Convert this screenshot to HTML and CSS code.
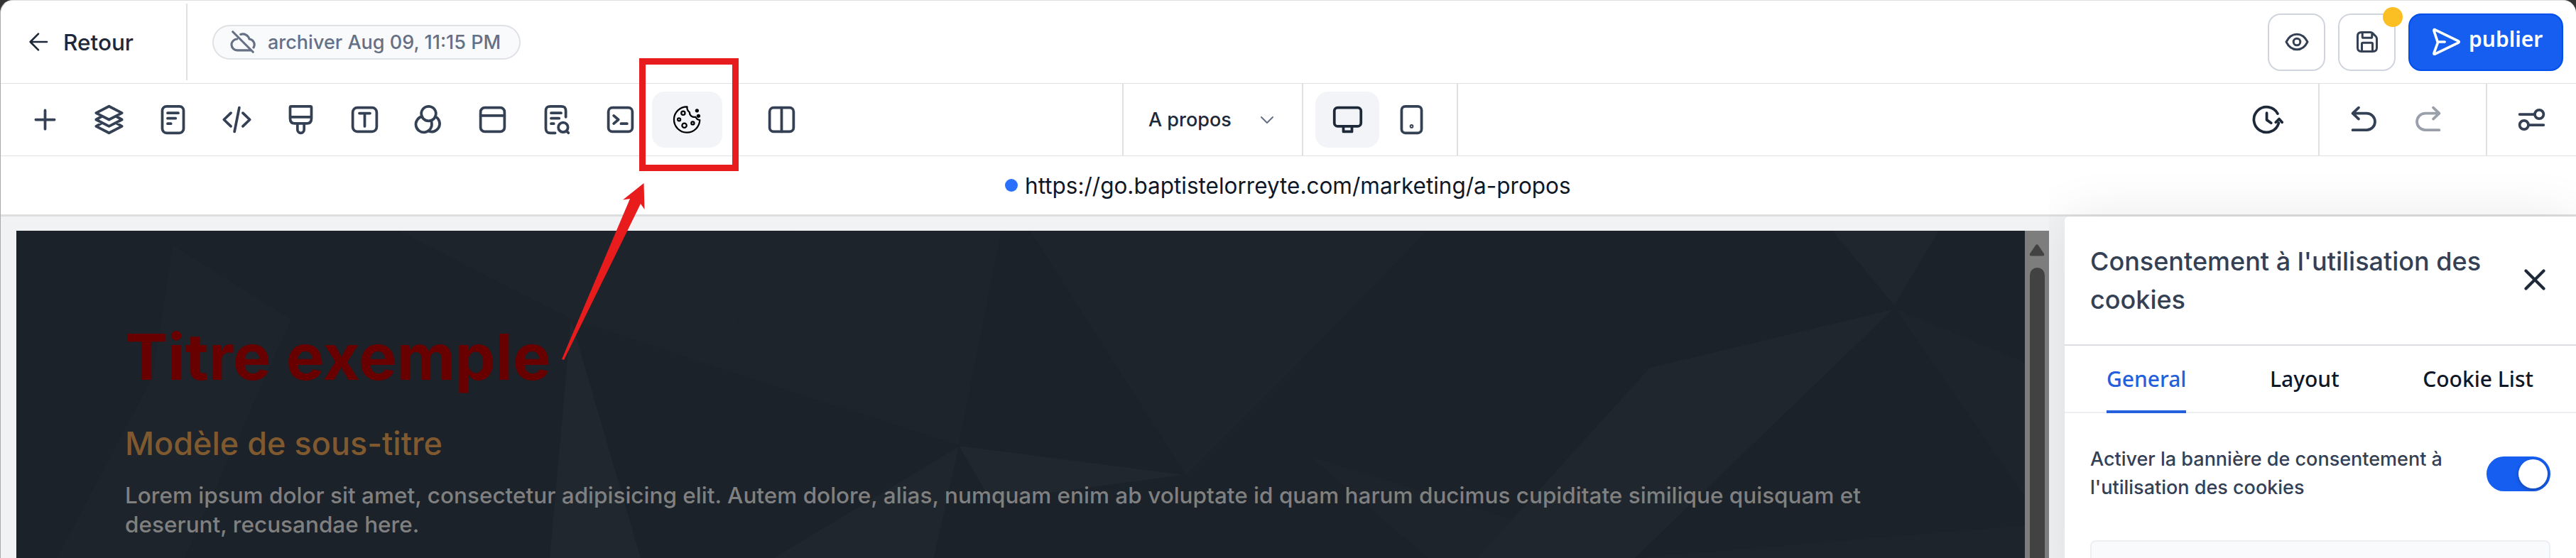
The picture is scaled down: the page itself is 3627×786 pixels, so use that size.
FILE: index.html
```
<!DOCTYPE html>
<html lang="fr">
<head>
  <meta charset="UTF-8" />
  <meta name="viewport" content="width=device-width, initial-scale=1.0" />
  <title>Page Builder</title>
  <link rel="stylesheet" href="styles.css">
</head>
<body>
  <div class="app">
    <header class="topbar">
      <button class="back">
        <svg class="icon" width="32" height="32" viewBox="0 0 24 24" aria-hidden="true"><path d="M21 12H3.5M12 20.500L3.500 12L12 3.500" /></svg>
        <span>Retour</span>
      </button>
      <div class="status">
        <svg class="icon" width="38" height="38" viewBox="0 0 24 24" aria-hidden="true"><path d="M3 3l18 18M6.800 9.500A5 5 0 0 0 7 19.500H18.500M10 5.300A6 6 0 0 1 17.700 9.500A5 5 0 0 1 21.500 17" /></svg>
        <span>archiver Aug 09, 11:15 PM</span>
      </div>
      <div class="actions">
        <button class="square-btn" aria-label="Aperçu">
          <svg class="icon" width="36" height="36" viewBox="0 0 24 24"><path d="M2 12C4.500 7 8 4.800 12 4.800S19.500 7 22 12C19.500 17 16 19.200 12 19.200S4.500 17 2 12Z" /><circle cx="12" cy="12" r="3.200" /></svg>
        </button>
        <button class="square-btn" aria-label="Enregistrer">
          <svg class="icon" width="36" height="36" viewBox="0 0 24 24"><path d="M7.500 3v4.300c0 .6.300.9.900.9h7.200c.6 0 .9-.300.9-.900V3.500M17 21v-7.300c0-.6-.3-.9-.9-.9H7.900c-.6 0-.9.300-.900.900V21M21 9v8.500c0 2.500-1 3.500-3.500 3.500h-11C4 21 3 20 3 17.500v-11C3 4 4 3 6.500 3H15c1 0 1.500.2 2.200.9l2.900 2.900C20.800 7.500 21 8 21 9z" /></svg>
          <span class="badge"></span>
        </button>
        <button class="publish">
          <svg class="icon" width="44" height="44" viewBox="0 0 24 24"><path d="M11 12H5.500M5.700 12.500L2.700 20.600c-.2.700.2 1 .8.700L21.500 12.600c.6-.3.600-.9 0-1.200L3.500 2.700c-.6-.3-1 0-.8.700L5.700 12.500z" /></svg>
          <span>publier</span>
        </button>
      </div>
    </header>

    <nav class="toolbar">
      <div class="tools">
        <button class="tool"><svg class="icon" width="45" height="45" viewBox="0 0 24 24"><path d="M12 5v14M5 12h14" /></svg></button>
        <button class="tool"><svg class="icon" width="45" height="45" viewBox="0 0 24 24"><path d="M12 2l9.700 5L12 12L2.300 7zM6.500 9.600L2.300 12L12 17l9.700-5l-4.200-2.400M6.500 14.600L2.300 17L12 22l9.700-5l-4.200-2.400" /></svg></button>
        <button class="tool"><svg class="icon" width="45" height="45" viewBox="0 0 24 24"><rect x="4" y="2" width="16" height="20" rx="3.200" /><path d="M8 7h8M8 11h6M8 15h2.500" /></svg></button>
        <button class="tool"><svg class="icon" width="45" height="45" viewBox="0 0 24 24"><path d="M7.500 7L2.300 12l5.200 5M16.500 7l5.200 5l-5.200 5M13.800 3l-3.600 18" /></svg></button>
        <button class="tool"><svg class="icon" width="45" height="45" viewBox="0 0 24 24"><path d="M4 2.800c0-.500.300-.800.800-.800h14.400c.5 0 .8.300.8.800V11c0 2.500-1 3.800-3.500 3.800h-9C5 14.800 4 13.500 4 11zM4 10h16M9.500 15v4.500a2.500 2.500 0 0 0 5 0V15" /></svg></button>
        <button class="tool"><svg class="icon" width="45" height="45" viewBox="0 0 24 24"><rect x="3" y="3" width="18" height="18" rx="3.500" /><path d="M8 7.200h8M12 7.200V17" /></svg></button>
        <button class="tool"><svg class="icon" width="45" height="45" viewBox="0 0 24 24"><circle cx="12" cy="7.500" r="5.500" /><path d="M7 9.700A6 6 0 1 0 14.300 14.500L14 12.700M17 9.700A6 6 0 1 1 11.500 20.500" /></svg></button>
        <button class="tool"><svg class="icon" width="45" height="45" viewBox="0 0 24 24"><rect x="3" y="3" width="18" height="18" rx="3.200" /><path d="M3 9h18" /></svg></button>
        <button class="tool"><svg class="icon" width="45" height="45" viewBox="0 0 24 24"><path d="M19 10V5.500C19 3 18 2 15.500 2h-8C5 2 4 3 4 5.500v13C4 21 5 22 7.500 22H11M8 7h7.500M8 11h6M8 15h2M21 22l-1.500-1.500" /><circle cx="17" cy="17.800" r="3.600" /></svg></button>
        <button class="tool"><svg class="icon" width="45" height="45" viewBox="0 0 24 24"><rect x="3" y="3" width="18" height="18" rx="3" /><path d="M7 9l3.500 3L7 15M12.500 15h4.500" /></svg></button>
        <button class="tool active">
          <svg class="icon cookie" width="45" height="45" viewBox="0 0 24 24"><path d="M12 2.300A9.700 9.700 0 1 0 21.500 12.300C20 12.300 19 11.300 18.300 10C16 10.500 13.800 9 13.800 6.500C12.500 5.500 11.800 4 12 2.300z" /><circle cx="9" cy="7" r="1.400" /><circle cx="5.900" cy="11.900" r="1.100" /><circle cx="9.900" cy="16.400" r="1.700" /><circle cx="16.200" cy="14.600" r="1.100" /><circle class="crumb" cx="19.400" cy="5.200" r="1.400" /><circle class="crumb" cx="20.500" cy="9.200" r="1.400" /></svg>
        </button>
        <button class="tool columns"><svg class="icon" width="45" height="45" viewBox="0 0 24 24"><rect x="3" y="3" width="18" height="18" rx="3" /><path d="M12 3v18" /></svg></button>
      </div>
      <div class="page-select">
        <span>A propos</span>
        <svg class="icon chevron" width="24" height="24" viewBox="0 0 24 24"><path d="M4 8l8 8l8-8" /></svg>
      </div>
      <div class="devices">
        <button class="device active"><svg class="icon" width="45" height="45" viewBox="0 0 24 24"><rect x="2" y="3" width="20" height="14" rx="2.500" /><path d="M8.800 17v4h6.400v-4" /></svg></button>
        <button class="device"><svg class="icon" width="45" height="45" viewBox="0 0 24 24"><rect x="4.500" y="2" width="15" height="20" rx="2.800" /><circle cx="12" cy="17" r=".5" /></svg></button>
      </div>
      <div class="history">
        <button><svg class="icon dark" width="45" height="45" viewBox="0 0 24 24"><path d="M19.700 7.500A9.500 9.500 0 1 0 20.500 14.500M18.300 14l2.500-2.500L23 14M11.500 7v5.200l3.300 2.300" /></svg></button>
      </div>
      <div class="undo-redo">
        <button><svg class="icon" width="45" height="45" viewBox="0 0 24 24"><path d="M8 3L3.500 7.300L8 11.500M3.500 7.300H14a6 6 0 0 1 0 12.500H3.500" /></svg></button>
        <button class="disabled"><svg class="icon" width="45" height="45" viewBox="0 0 24 24"><path d="M16 3l4.500 4.300L16 11.500M20.500 7.300H10a6 6 0 0 0 0 12.500H20.500" /></svg></button>
      </div>
      <div class="settings">
        <button><svg class="icon" width="45" height="45" viewBox="0 0 24 24"><path d="M3 8h11.500M9.500 16H21" /><circle cx="17.700" cy="8" r="3.300" /><circle cx="6.300" cy="16" r="3.300" /></svg></button>
      </div>
    </nav>

    <div class="urlbar">
      <span class="dot"></span>
      <span>https://go.baptistelorreyte.com/marketing/a-propos</span>
    </div>

    <main class="workspace">
      <section class="canvas">
        <svg class="facets" viewBox="23 325 2828 461" preserveAspectRatio="none" aria-hidden="true">
          <g fill="#1d242b">
            <path d="M243 345L215 530L80 786H260L410 450z" />
            <path d="M1118 325H1410L1350 627L1000 515z" />
            <path d="M1450 325H2010L1830 510L1670 670z" />
            <path d="M560 325H1118L1000 515L806 450z" />
            <path d="M2668 434L2851 510V700z" />
            <path d="M2302 786L2851 740V786z" />
            <path d="M1843 642L2010 786H2302z" />
          </g>
          <g fill="#1f262d">
            <path d="M2580 325H2730L2667 430z" />
            <path d="M2665 436L2323 518L2080 786H2302z" />
            <path d="M1350 629L1090 786H1315z" />
          </g>
          <g fill="#21272e">
            <path d="M804 450L774 786H902z" />
            <path d="M1350 628L1667 669L1395 705z" />
          </g>
        </svg>
        <div class="content">
          <h1>Titre exemple</h1>
          <h2>Modèle de sous-titre</h2>
          <p>Lorem ipsum dolor sit amet, consectetur adipisicing elit. Autem dolore, alias, numquam enim ab voluptate id quam harum ducimus cupiditate similique quisquam et<br>deserunt, recusandae here.</p>
        </div>
      </section>
      <div class="scrollbar">
        <svg width="22" height="17" viewBox="0 0 22 17"><path d="M9 1.500q2-2.500 4 0l8 12q1 3-2 3H3q-3 0-2-3z" /></svg>
        <div class="thumb"></div>
      </div>

      <aside class="panel">
        <div class="panel-head">
          <h3>Consentement à l'utilisation des cookies</h3>
          <svg class="icon close" width="50" height="50" viewBox="0 0 24 24"><path d="M6 6l12 12M18 6L6 18" /></svg>
        </div>
        <div class="tabs">
          <a class="tab selected">General</a>
          <a class="tab">Layout</a>
          <a class="tab">Cookie List</a>
        </div>
        <div class="setting">
          <label>Activer la bannière de consentement à l'utilisation des cookies</label>
          <span class="toggle"><span class="knob"></span></span>
        </div>
        <div class="box"></div>
      </aside>
    </main>

    <!-- Highlight on the cookie button -->
    <div class="highlight"></div>
    <svg class="arrow" width="130" height="260" viewBox="780 250 130 260" aria-hidden="true">
      <path d="M791 506L887 280L877 281.500L906.500 258L907.500 295L902 287L794 507z" />
    </svg>
  </div>
</body>
</html>
```
FILE: styles.css
```
:root {
  --line: #e0e1e5;
  --ink: #344054;
  --dark: #1d2939;
  --blue: #155eef;
  --red: #e81c1c;
}

* {
  box-sizing: border-box;
}

body {
  margin: 0;
  background: #333;
  font-family: Inter, sans-serif;
  overflow: hidden;
}

button {
  background: none;
  border: 0;
  padding: 0;
  font: inherit;
  color: inherit;
}

h1, h2, h3, p {
  margin: 0;
}

.app {
  position: relative;
  width: 3627px;
  height: 786px;
  background: #fff;
  border-left: 1px solid #aaa;
  border-top: 1px solid #dedede;
  border-radius: 18px 18px 0 0;
  overflow: hidden;
  display: flex;
  flex-direction: column;
}

.icon {
  display: block;
  flex: none;
  fill: none;
  stroke: currentColor;
  stroke-width: 2;
  stroke-linecap: round;
  stroke-linejoin: round;
}

/* Header */
.topbar {
  height: 117px;
  flex: none;
  border-bottom: 1px solid var(--line);
  display: flex;
  align-items: center;
  color: var(--dark);
}

.back {
  display: flex;
  align-items: center;
  width: 263px;
  height: 108px;
  padding-left: 37px;
  gap: 19px;
  font-size: 31.5px;
  font-weight: 500;
  border-right: 2px solid var(--line);
}

.status {
  display: flex;
  align-items: center;
  width: 434px;
  height: 49px;
  margin-left: 35px;
  padding-left: 22px;
  gap: 16px;
  border: 2px solid var(--line);
  border-radius: 25px;
  background: #f9fafb;
  color: #667085;
  font-size: 27px;
  font-weight: 500;
  white-space: nowrap;
}

.actions {
  display: flex;
  gap: 18px;
  margin-left: auto;
  margin-right: 18px;
}

.square-btn {
  position: relative;
  display: flex;
  align-items: center;
  justify-content: center;
  width: 81px;
  height: 81px;
  border: 2px solid #d0d5dd;
  border-radius: 18px;
  color: var(--ink);
}

.badge {
  position: absolute;
  top: -11px;
  right: -12px;
  width: 28px;
  height: 28px;
  border-radius: 50%;
  background: #fbbf24;
}

.publish {
  display: flex;
  align-items: center;
  width: 218px;
  height: 81px;
  padding-left: 29px;
  gap: 10px;
  border: 2px solid #004eeb;
  border-radius: 18px;
  background: var(--blue);
  color: #fff;
  font-family: "Noto Sans", sans-serif;
  font-size: 30px;
  font-weight: 600;
}

.publish span {
  margin-top: -9px;
}

/* Toolbar */
.toolbar {
  height: 102px;
  flex: none;
  display: flex;
  border-bottom: 1px solid var(--line);
  color: var(--ink);
}

.toolbar > div {
  display: flex;
  align-items: center;
}

.tools {
  width: 1579px;
  padding-left: 17px;
}

.tool,
.device {
  display: flex;
  align-items: center;
  justify-content: center;
  width: 90px;
  height: 79px;
  border-radius: 18px;
}

.tool.active {
  width: 99px;
  background: #f2f4f7;
}

.tool.columns {
  margin-left: 38px;
}

.device.active {
  background: #f2f4f7;
  color: var(--dark);
}

.cookie {
  color: #000;
  stroke-width: 1.2;
}

.crumb {
  fill: currentColor;
  stroke: none;
}

.page-select {
  width: 253px;
  padding-left: 35px;
  border-left: 2px solid var(--line);
  color: var(--dark);
  font-size: 27px;
  font-weight: 500;
}

.chevron {
  margin-left: 38px;
  color: #667085;
}

.devices {
  width: 220px;
  padding-left: 17px;
  border-left: 2px solid var(--line);
  border-right: 2px solid var(--line);
}

.history {
  margin-left: auto;
  padding-right: 49px;
}

.dark {
  color: var(--dark);
}

.undo-redo {
  width: 236px;
  padding-left: 40px;
  gap: 45px;
  border-left: 2px solid var(--line);
}

.disabled {
  color: #9aa0aa;
}

.settings {
  width: 127px;
  padding-left: 40px;
  border-left: 2px solid var(--line);
}

/* Page address */
.urlbar {
  height: 82px;
  flex: none;
  display: flex;
  align-items: center;
  padding-left: 1414px;
  gap: 10px;
  color: #101828;
  font-size: 31.5px;
  white-space: nowrap;
}

.dot {
  width: 18px;
  height: 18px;
  border-radius: 50%;
  background: #2970ff;
}

/* Workspace */
.workspace {
  flex: 1;
  display: flex;
  border-top: 3px solid #dddee0;
  background: #f1f2f4;
}

.canvas {
  display: grid;
  width: 2828px;
  height: 461px;
  margin: 20px 0 0 22px;
  background: #1b2229;
  overflow: hidden;
}

.facets,
.content {
  grid-area: 1 / 1;
  width: 2828px;
  height: 461px;
}

.content {
  padding: 124px 0 0 153px;
  white-space: nowrap;
}

.content h1 {
  color: #690000;
  font-size: 90px;
  font-weight: 700;
  line-height: 108px;
}

.content h2 {
  margin-top: 40px;
  color: #80592f;
  font-size: 45px;
  font-weight: 500;
  line-height: 56px;
}

.content p {
  margin-top: 24px;
  color: #808080;
  font-size: 31.5px;
  font-weight: 500;
  line-height: 41px;
}

.scrollbar {
  width: 34px;
  margin-top: 20px;
  padding-top: 19px;
  background: #7d7d7d;
  display: flex;
  flex-direction: column;
  align-items: center;
  gap: 16px;
  fill: #424242;
}

.thumb {
  flex: 1;
  width: 21px;
  border-radius: 11px 11px 0 0;
  background: #424242;
}

.panel {
  width: 720px;
  margin-left: auto;
  background: #fff;
  border-radius: 6px 0 0 0;
  box-shadow: 0 0 75px rgba(0, 0, 0, 0.09);
  clip-path: inset(-85px 0 0 -22px);
}

.panel-head {
  height: 182px;
  display: flex;
  align-items: center;
  padding: 0 33px 0 36px;
  border-bottom: 2px solid #dcdee2;
}

.panel-head h3 {
  flex: 1;
  color: var(--ink);
  font-size: 36px;
  font-weight: 500;
  line-height: 54px;
}

.close {
  margin-top: -3px;
  color: var(--dark);
}

.tabs {
  height: 95px;
  display: flex;
  justify-content: space-between;
  padding: 0 60px 0 59px;
  border-bottom: 2px solid #eeeff3;
}

.tab {
  height: 95px;
  padding-top: 24px;
  color: #101828;
  font-family: "Noto Sans", sans-serif;
  font-size: 30px;
  font-weight: 500;
  line-height: 46px;
}

.tab.selected {
  color: #2560dc;
  border-bottom: 4px solid #2560dc;
}

.setting {
  display: flex;
  align-items: center;
  justify-content: space-between;
  height: 170px;
  padding: 0 36px 0 36px;
}

.setting label {
  width: 520px;
  color: var(--ink);
  font-size: 27px;
  font-weight: 500;
  line-height: 40px;
}

.toggle {
  display: flex;
  justify-content: flex-end;
  align-items: center;
  width: 90px;
  height: 49px;
  padding: 4px;
  border-radius: 25px;
  background: var(--blue);
}

.knob {
  width: 41px;
  height: 41px;
  border-radius: 50%;
  background: #fff;
  box-shadow: 0 2px 5px rgba(16, 24, 40, 0.35);
}

.box {
  height: 60px;
  margin: 9px 36px 0;
  border: 2px solid #eeeff3;
  border-radius: 8px;
  background: #f9fafb;
}

/* Overlay annotation */
.highlight {
  position: absolute;
  left: 899px;
  top: 81px;
  width: 140px;
  height: 159px;
  border: 9px solid var(--red);
}

.arrow {
  position: absolute;
  left: 779px;
  top: 249px;
  fill: var(--red);
}
```
